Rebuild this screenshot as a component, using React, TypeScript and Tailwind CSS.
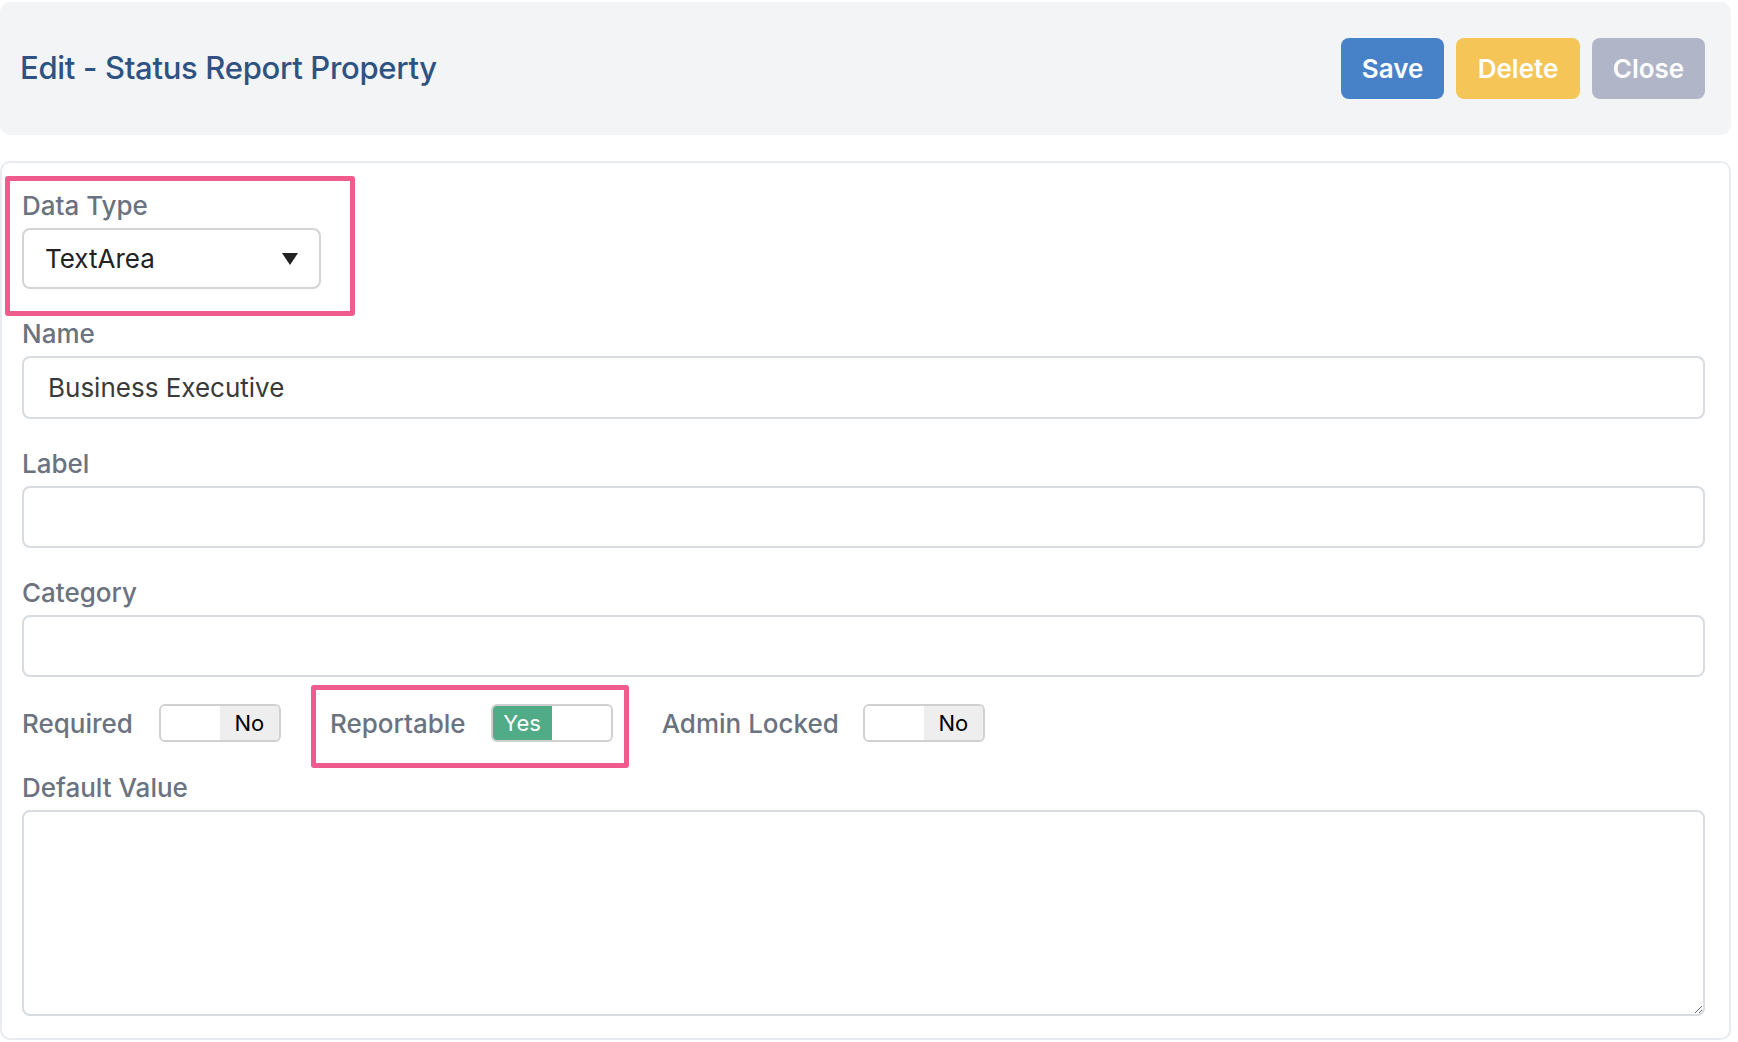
import React from 'react';

function Toggle({ on }: { on: boolean }) {
  return (
    <div className="flex w-[122px] h-[38px] border-2 border-[#d0d0d0] rounded-[6px] overflow-hidden text-[22px]">
      {on ? (
        <>
          <div className="w-1/2 bg-[#50ab87] text-white flex items-center justify-center">Yes</div>
          <div className="w-1/2 bg-white" />
        </>
      ) : (
        <>
          <div className="w-1/2 bg-white" />
          <div className="w-1/2 bg-[#eeeeee] text-black flex items-center justify-center">No</div>
        </>
      )}
    </div>
  );
}

function Field({ label, children }: { label: string; children: React.ReactNode }) {
  return (
    <div className="flex flex-col">
      <label className="text-[26px] font-medium leading-[28px] text-[#6b7280] mb-[8px]">{label}</label>
      {children}
    </div>
  );
}

export default function App() {
  return (
    <div className="w-[1738px] h-[1042px] bg-white font-['Inter','Liberation_Sans',sans-serif] overflow-hidden">
      {/* Header */}
      <div className="w-[1731px] mt-[2px] h-[133px] bg-[#f3f4f6] rounded-[10px] flex items-center justify-between pl-[20px] pr-[26px]">
        <h1 className="text-[31px] font-medium text-[#2e5383] tracking-[-0.3px]">Edit - Status Report Property</h1>
        <div className="flex gap-[12px]">
          <button className="h-[61px] w-[103px] rounded-[8px] bg-[#4782c8] text-white text-[26px] font-semibold">Save</button>
          <button className="h-[61px] w-[124px] rounded-[8px] bg-[#f5c657] text-white text-[26px] font-semibold">Delete</button>
          <button className="h-[61px] w-[113px] rounded-[8px] bg-[#b0b5c8] text-white text-[26px] font-semibold">Close</button>
        </div>
      </div>

      {/* Card */}
      <div className="w-[1731px] mt-[26px] h-[879px] border-2 border-[#e8ebef] rounded-[10px] bg-white pt-[29px] pl-[20px] pr-[24px] flex flex-col">
        {/* Data Type */}
        <div className="relative w-[299px]">
          <div className="absolute -left-[17px] -top-[16px] w-[350px] h-[140px] border-[5px] border-[#f05b8d] rounded-[3px] pointer-events-none" />
          <Field label="Data Type">
            <div className="h-[61px] border-2 border-[#d4d4d4] rounded-[8px] flex items-center justify-between pl-[21px] pr-[20px]">
              <span className="text-[26px] text-[#222222]">TextArea</span>
              <svg width="18" height="14" viewBox="0 0 18 14">
                <path d="M1 1 H17 L9 13 Z" fill="#222222" />
              </svg>
            </div>
          </Field>
        </div>

        <div className="mt-[31px]">
          <Field label="Name">
            <input
              defaultValue="Business Executive"
              className="h-[63px] w-full border-2 border-[#d8dce0] rounded-[8px] px-[24px] text-[26px] text-[#3a3a3a] outline-none"
            />
          </Field>
        </div>

        <div className="mt-[31px]">
          <Field label="Label">
            <input className="h-[62px] w-full border-2 border-[#d8dce0] rounded-[8px] px-[24px] text-[26px] outline-none" />
          </Field>
        </div>

        <div className="mt-[31px]">
          <Field label="Category">
            <input className="h-[62px] w-full border-2 border-[#d8dce0] rounded-[8px] px-[24px] text-[26px] outline-none" />
          </Field>
        </div>

        {/* Toggles */}
        <div className="mt-[27px] flex items-center h-[38px]">
          <span className="text-[26px] font-medium text-[#6b7280] mr-[26px]">Required</span>
          <Toggle on={false} />
          <div className="relative flex items-center ml-[49px]">
            <div className="absolute -left-[19px] -top-[19px] w-[318px] h-[83px] border-[5px] border-[#f05b8d] rounded-[3px] pointer-events-none" />
            <span className="text-[26px] font-medium text-[#6b7280] mr-[25px]">Reportable</span>
            <Toggle on={true} />
          </div>
          <span className="text-[26px] font-medium text-[#6b7280] ml-[49px] mr-[24px]">Admin Locked</span>
          <Toggle on={false} />
        </div>

        <div className="mt-[32px]">
          <Field label="Default Value">
            <textarea className="h-[206px] w-full border-2 border-[#d8dce0] rounded-[8px] px-[24px] text-[26px] outline-none" />
          </Field>
        </div>
      </div>
    </div>
  );
}
